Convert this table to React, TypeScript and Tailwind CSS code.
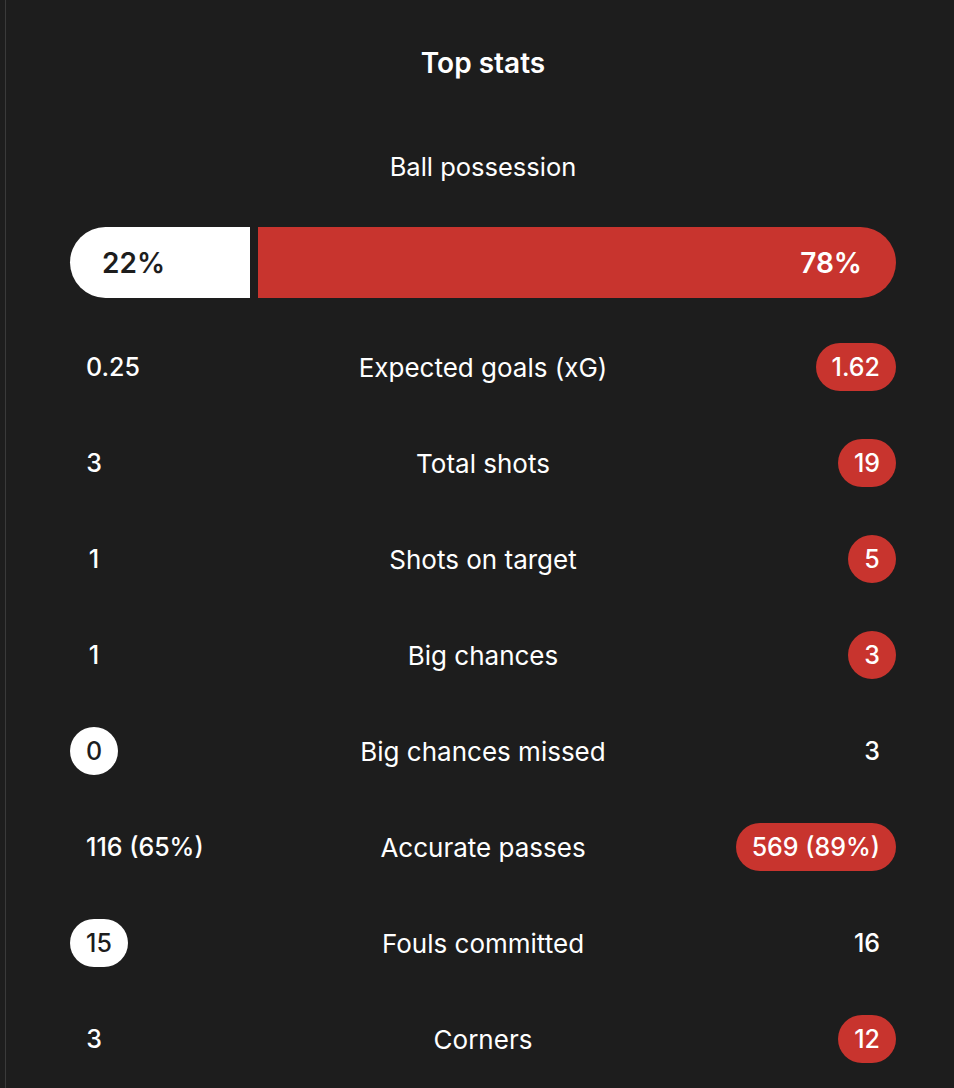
import React from "react";

type Side = "none" | "white" | "red";
const rows: { l: string; label: string; r: string; hl: Side; side: "l" | "r" | "" }[] = [
  { l: "0.25", label: "Expected goals (xG)", r: "1.62", hl: "red", side: "r" },
  { l: "3", label: "Total shots", r: "19", hl: "red", side: "r" },
  { l: "1", label: "Shots on target", r: "5", hl: "red", side: "r" },
  { l: "1", label: "Big chances", r: "3", hl: "red", side: "r" },
  { l: "0", label: "Big chances missed", r: "3", hl: "white", side: "l" },
  { l: "116 (65%)", label: "Accurate passes", r: "569 (89%)", hl: "red", side: "r" },
  { l: "15", label: "Fouls committed", r: "16", hl: "white", side: "l" },
  { l: "3", label: "Corners", r: "12", hl: "red", side: "r" },
];

function Pill({ text, kind }: { text: string; kind: Side }) {
  const cls =
    kind === "red"
      ? "bg-[#c8342e] text-white"
      : kind === "white"
      ? "bg-white text-[#1d1d1d]"
      : "bg-transparent text-white";
  return (
    <span
      className={`inline-flex h-[48px] min-w-[48px] items-center justify-center rounded-full px-[16px] text-[25px] font-medium leading-none ${cls}`}
    >
      {text}
    </span>
  );
}

export default function App() {
  return (
    <div
      className="h-[1088px] w-[954px] overflow-hidden bg-[#1d1d1d] text-white"
      style={{ fontFamily: "Inter, 'Noto Sans', sans-serif" }}
    >
      <div className="ml-[5px] h-full border-l border-[#3a3a3a] pl-[64px] pr-[58px]">
        <div className="flex h-[126px] items-center justify-center text-[28px] font-semibold">
          Top stats
        </div>
        <div className="flex h-[82px] items-center justify-center text-[25.5px]">
          Ball possession
        </div>
        <div className="mt-[19px] flex h-[71px] gap-[8px]">
          <div className="flex w-[180px] items-center rounded-l-full bg-white pl-[32px] text-[28px] font-semibold text-[#1d1d1d]">
            22%
          </div>
          <div className="flex flex-1 items-center justify-end rounded-r-full bg-[#c8342e] pr-[34px] text-[28px] font-semibold text-white">
            78%
          </div>
        </div>
        <div className="mt-[21px]">
          {rows.map((row, i) => (
            <div key={i} className="grid h-[96px] grid-cols-[1fr_auto_1fr] items-center">
              <div className="flex justify-start">
                <Pill text={row.l} kind={row.side === "l" ? row.hl : "none"} />
              </div>
              <div className="text-center text-[26px]">{row.label}</div>
              <div className="flex justify-end">
                <Pill text={row.r} kind={row.side === "r" ? row.hl : "none"} />
              </div>
            </div>
          ))}
        </div>
      </div>
    </div>
  );
}
